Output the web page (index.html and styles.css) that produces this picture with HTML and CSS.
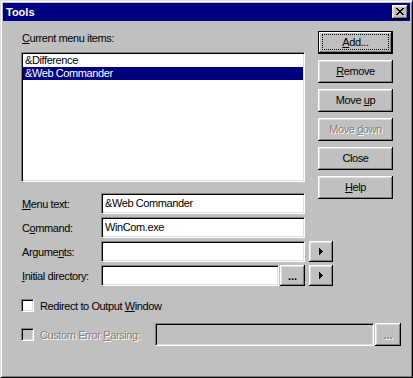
FILE: index.html
```html
<!DOCTYPE html>
<html>
<head>
<meta charset="utf-8">
<link rel="stylesheet" href="styles.css">
</head>
<body>
<div class="window">
  <div class="titlebar">
    <span class="title">Tools</span>
    <div class="close btn-raised">
      <svg width="8" height="7" viewBox="0 0 8 7" shape-rendering="crispEdges"><path d="M0 0h2v1H0zM6 0h2v1H6zM1 1h2v1H1zM5 1h2v1H5zM2 2h4v1H2zM3 3h2v1H3zM2 4h4v1H2zM1 5h2v1H1zM5 5h2v1H5zM0 6h2v1H0zM6 6h2v1H6z" fill="#000"/></svg>
    </div>
  </div>
  <div class="content">
    <div class="top">
      <div class="left">
        <div class="list-label"><u>C</u>urrent menu items:</div>
        <div class="listbox sunken">
          <div class="item">&amp;Difference</div>
          <div class="item selected">&amp;Web Commander</div>
        </div>
        <div class="row row-menu">
          <div class="lbl"><u>M</u>enu text:</div>
          <div class="field sunken w-full">&amp;Web Commander</div>
        </div>
        <div class="row">
          <div class="lbl">C<u>o</u>mmand:</div>
          <div class="field sunken w-full">WinCom.exe</div>
        </div>
      </div>
      <div class="buttons">
        <div class="btn default"><span class="focus"><u>A</u>dd...</span></div>
        <div class="btn btn-raised"><span><u>R</u>emove</span></div>
        <div class="btn btn-raised"><span>Move <u>u</u>p</span></div>
        <div class="btn btn-raised disabled"><span>Move <u>d</u>own</span></div>
        <div class="btn btn-raised"><span>Close</span></div>
        <div class="btn btn-raised"><span><u>H</u>elp</span></div>
      </div>
    </div>
    <div class="row">
      <div class="lbl">Argume<u>n</u>ts:</div>
      <div class="field sunken w-full"></div>
      <div class="small-btn btn-raised arrow-btn"><svg width="4" height="7" viewBox="0 0 4 7" shape-rendering="crispEdges"><path d="M0 0h1v7H0zM1 1h1v5H1zM2 2h1v3H2zM3 3h1v1H3z" fill="#000"/></svg></div>
    </div>
    <div class="row row-dir">
      <div class="lbl"><u>I</u>nitial directory:</div>
      <div class="field sunken w-dir"></div>
      <div class="small-btn btn-raised dots">...</div>
      <div class="small-btn btn-raised arrow-btn"><svg width="4" height="7" viewBox="0 0 4 7" shape-rendering="crispEdges"><path d="M0 0h1v7H0zM1 1h1v5H1zM2 2h1v3H2zM3 3h1v1H3z" fill="#000"/></svg></div>
    </div>
    <div class="check-row first">
      <div class="checkbox sunken"></div>
      <span class="check-label">Redirect to Output <u>W</u>indow</span>
    </div>
    <div class="check-row second">
      <div class="checkbox sunken off"></div>
      <span class="check-label disabled-text">Custom Error <u>P</u>arsing:</span>
      <div class="field sunken off w-custom"></div>
      <div class="small-btn btn-raised dots dots-disabled custom-btn">...</div>
    </div>
  </div>
</div>
</body>
</html>
```

FILE: styles.css
```css
html, body {
  margin: 0;
  padding: 0;
  background: #c0c0c0;
}
body {
  font-family: "Liberation Sans", Arial, sans-serif;
  font-size: 11px;
  letter-spacing: -0.4px;
  color: #000;
}
u {
  text-decoration: underline;
  text-underline-offset: 1px;
}
.window {
  width: 413px;
  height: 378px;
  box-sizing: border-box;
  border: 1px solid;
  border-color: #dfdfdf #000 #000 #dfdfdf;
  box-shadow: inset 1px 1px #fff, inset -1px -1px #808080;
  padding: 2px;
  background: #c0c0c0;
}
.titlebar {
  height: 18px;
  background: #000080;
  display: flex;
  align-items: center;
  justify-content: space-between;
  padding: 0 2px 0 3px;
}
.title {
  color: #fff;
  font-weight: bold;
  letter-spacing: 0;
}
.btn-raised {
  background: #c0c0c0;
  box-shadow: inset -1px -1px #000, inset 1px 1px #fff, inset -2px -2px #808080, inset 2px 2px #dfdfdf;
}
.close {
  width: 16px;
  height: 14px;
  display: flex;
  align-items: center;
  justify-content: center;
  box-sizing: border-box;
  padding: 0 1px 1px 0;
}
.content {
  padding: 10px 0 0 18px;
}
.top {
  display: flex;
  align-items: flex-start;
}
.left {
  width: 284px;
}
.list-label {
  height: 21px;
  box-sizing: border-box;
  padding: 1px 0 0 1px;
  line-height: 13px;
}
.sunken {
  box-sizing: border-box;
  border: 1px solid;
  border-color: #808080 #fff #fff #808080;
  box-shadow: inset 1px 1px #000, inset -1px -1px #dfdfdf;
  background: #fff;
}
.listbox {
  width: 284px;
  height: 130px;
  padding: 1px;
}
.item {
  height: 13px;
  line-height: 13px;
  padding-left: 2px;
  white-space: nowrap;
}
.item.selected {
  background: #000080;
  color: #fff;
}
.row {
  display: flex;
  align-items: center;
  height: 21px;
  margin-top: 3px;
}
.row-menu {
  margin-top: 11px;
}
.row-dir {
  margin-top: 3px;
}
.lbl {
  width: 79px;
  padding-left: 1px;
  white-space: nowrap;
}
.field {
  height: 21px;
  line-height: 19px;
  padding: 0 3px;
  white-space: nowrap;
}
.w-full {
  width: 204px;
}
.w-dir {
  width: 178px;
}
.small-btn {
  height: 21px;
  width: 24px;
  box-sizing: border-box;
  display: flex;
  align-items: center;
  justify-content: center;
}
.arrow-btn {
  margin-left: 4px;
}
.arrow-btn svg {
  margin-right: 1px;
}
.dots {
  width: 25px;
  margin-left: 1px;
  font-weight: bold;
  letter-spacing: 0;
  line-height: 1;
  align-items: flex-end;
  padding-bottom: 4px;
}
.buttons {
  margin-left: 13px;
  display: flex;
  flex-direction: column;
  gap: 6px;
}
.btn {
  width: 75px;
  height: 23px;
  box-sizing: border-box;
  display: flex;
  align-items: center;
  justify-content: center;
  white-space: nowrap;
}
.btn span {
  padding-bottom: 1px;
}
.btn.default {
  border: 1px solid #000;
  background: #c0c0c0;
  box-shadow: inset -1px -1px #000, inset 1px 1px #fff, inset -2px -2px #808080;
  padding: 2px 3px 3px 3px;
}
.btn.default .focus {
  flex: 1;
  align-self: stretch;
  border: 1px dotted #000;
  display: flex;
  align-items: center;
  justify-content: center;
  padding: 0;
}
.disabled span,
.disabled-text {
  color: #808080;
  text-shadow: 1px 1px 0 #fff;
}
.check-row {
  display: flex;
  align-items: center;
}
.check-row.first {
  margin-top: 13px;
  height: 13px;
}
.check-row.second {
  margin-top: 11px;
  height: 23px;
}
.checkbox {
  width: 13px;
  height: 13px;
  margin-right: 6px;
}
.checkbox.off,
.field.off {
  background: #c0c0c0;
}
.check-label {
  white-space: nowrap;
}
.w-custom {
  width: 219px;
  height: 23px;
  margin-left: auto;
}
.custom-btn {
  height: 23px;
  width: 26px;
  margin-right: 9px;
  padding-bottom: 5px;
}
.dots-disabled {
  color: #808080;
  text-shadow: 1px 1px 0 #fff;
}
.second .w-custom {
  margin-left: 0;
}
.second .check-label {
  width: 115px;
}
```
